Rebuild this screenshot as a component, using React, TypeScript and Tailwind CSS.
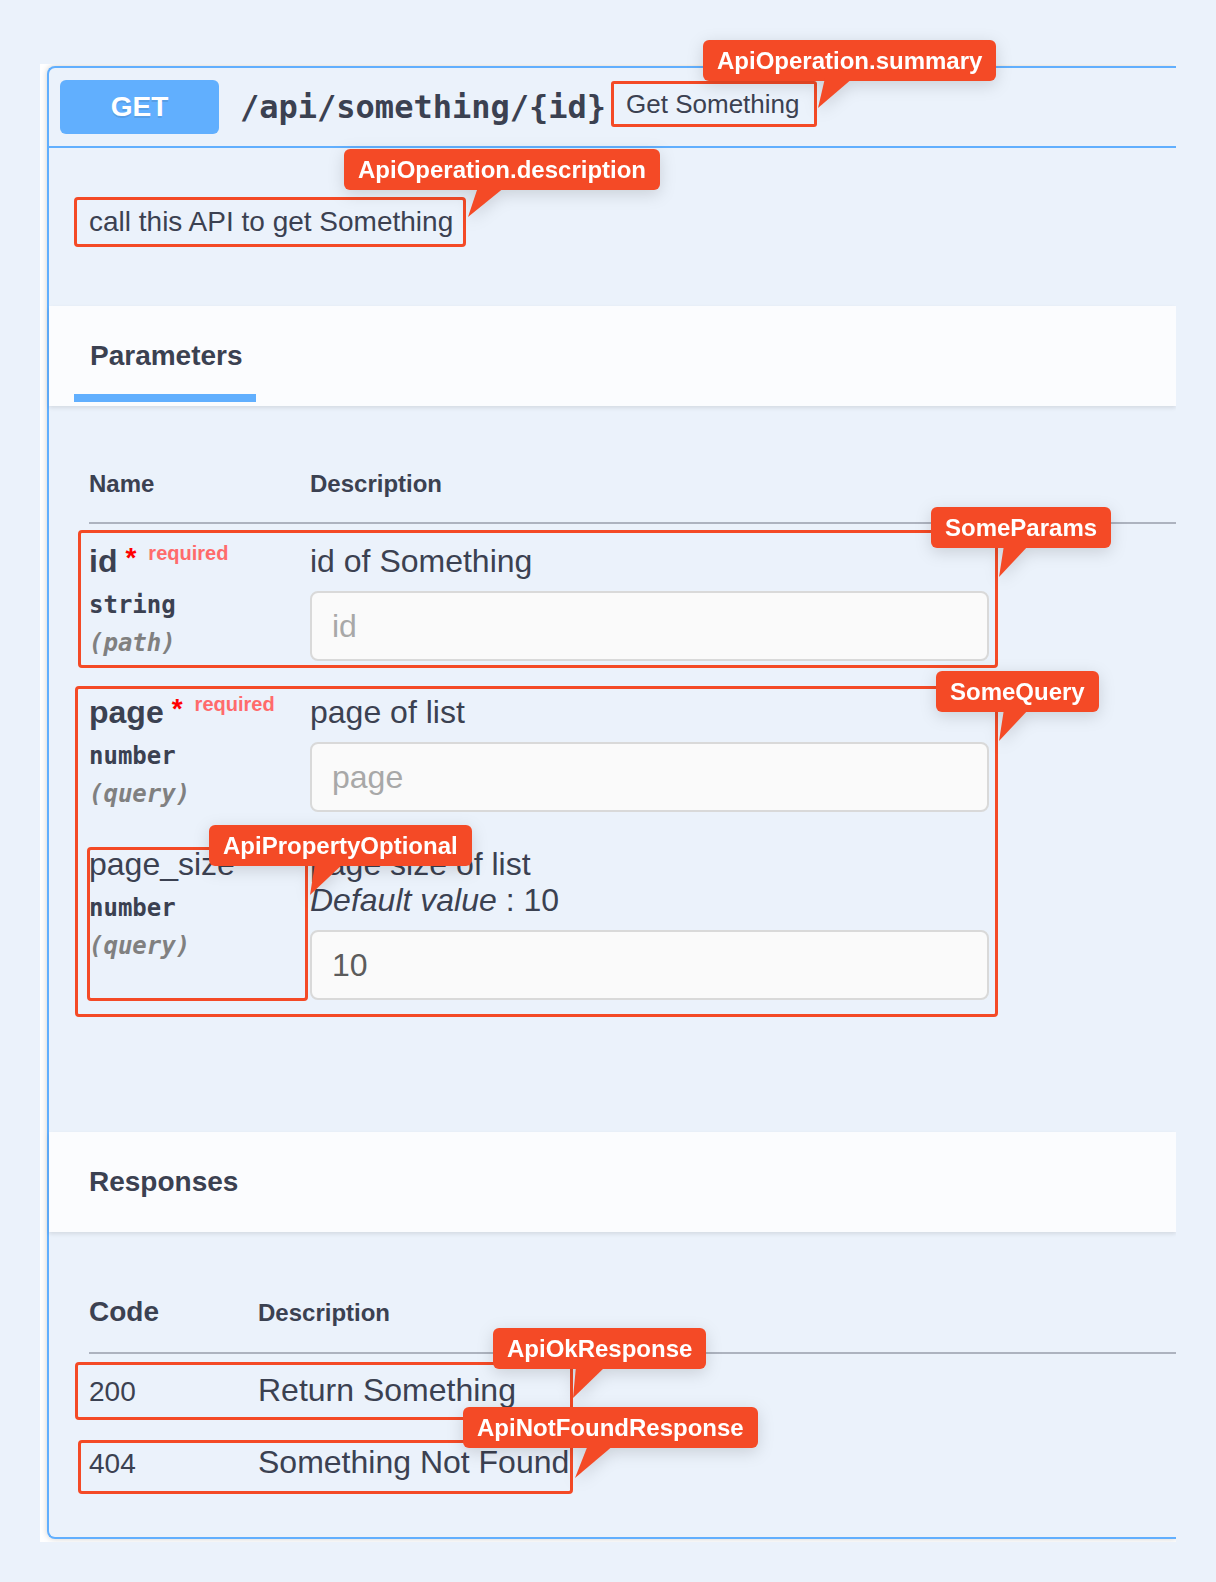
import React from "react";

const mono = "font-['DejaVu_Sans_Mono',monospace]";

function Box({ className }: { className: string }) {
  return (
    <div
      className={`pointer-events-none absolute rounded-[4px] border-[3px] border-[#f44a26] ${className}`}
    />
  );
}

function Tag({ label, pos, points }: { label: string; pos: string; points: string }) {
  return (
    <div className={`absolute z-20 drop-shadow-[0_4px_8px_rgba(0,0,0,0.14)] ${pos}`}>
      <div className="flex h-[41px] items-center whitespace-nowrap rounded-[6px] bg-[#f44a26] px-[14px] text-[24px] font-bold leading-none text-white">
        {label}
      </div>
      <svg className="absolute left-0 top-0 overflow-visible" width="1" height="1">
        <polygon points={points} fill="#f44a26" />
      </svg>
    </div>
  );
}

function ParamName({ name, required, type, where }: { name: string; required?: boolean; type: string; where: string }) {
  return (
    <>
      {required ? (
        <div className="flex h-[36px] items-baseline leading-[36px]">
          <span className="text-[32px] font-bold">{name}</span>
          <span className="relative -top-[5px] ml-[8px] text-[28px] font-bold text-[#ff0000]">*</span>
          <span className="relative -top-[12px] ml-[12px] text-[20px] font-bold text-[#ff6b6b]">required</span>
        </div>
      ) : (
        <div className="h-[36px] text-[32px] leading-[36px]">{name}</div>
      )}
      <div className={`${mono} mt-[11px] text-[24px] font-bold leading-[30px]`}>{type}</div>
      <div className={`${mono} mt-[8px] text-[24px] font-bold italic leading-[30px] text-[#808080]`}>{where}</div>
    </>
  );
}

function Field({ placeholder, value }: { placeholder: string; value?: string }) {
  return (
    <input
      readOnly
      placeholder={placeholder}
      defaultValue={value}
      className="mt-[12px] block h-[70px] w-full rounded-[8px] border-2 border-[#d9d9d9] bg-[#fafafa] px-[20px] text-[32px] text-[#5c5c5c] outline-none placeholder:text-[#a8a8a8]"
    />
  );
}

export default function App() {
  return (
    <div className="relative min-h-[1582px] w-full bg-[#ebf2fb] pl-[40px] pt-[64px] font-['Liberation_Sans',Arial,sans-serif] text-[#3b4151]">
      <div className="w-[1136px] overflow-hidden bg-white pb-[3px] pl-[7px] pt-[2px]">
        <div className="rounded-l-[8px] border-2 border-r-0 border-[#61affe] bg-[#ebf2fb] shadow-[0_0_6px_rgba(0,0,0,0.19)]">
          {/* summary bar */}
          <div className="flex h-[80px] items-center border-b-2 border-[#61affe] pl-[11px]">
            <span className="flex h-[54px] w-[159px] items-center justify-center rounded-[6px] bg-[#61affe] text-[28px] font-bold text-white [text-shadow:0_2px_0_rgba(0,0,0,0.1)]">
              GET
            </span>
            <span className={`${mono} ml-[21px] text-[32px] font-bold leading-[40px]`}>
              {"/api/something/{id}"}
            </span>
            <span className="ml-[5px] flex h-[46px] items-center self-start mt-[13px] rounded-[3px] border-[3px] border-[#f44a26] pl-[12px] pr-[15px] text-[26px] leading-[30px]">
              Get Something
            </span>
          </div>

          {/* description */}
          <div className="pb-[59px] pl-[25px] pt-[49px]">
            <div className="flex h-[50px] w-fit items-center rounded-[4px] border-[3px] border-[#f44a26] pl-[12px] pr-[10px] text-[28px] leading-[32px]">
              call this API to get Something
            </div>
          </div>

          {/* parameters header */}
          <div className="relative flex h-[100px] bg-[#fbfcfe] pl-[25px] shadow-[0_2px_4px_rgba(0,0,0,0.1)]">
            <div className="flex h-full w-[182px] flex-col justify-end pb-[4px]">
              <div className="pl-[16px] text-[28px] font-bold leading-[32px]">Parameters</div>
              <div className="mt-[22px] h-[8px] bg-[#61affe]" />
            </div>
          </div>

          {/* parameters table */}
          <div className="pb-[132px] pl-[40px] pt-[63px]">
            <div className="flex border-b-2 border-[#adb3bf] pb-[23px] text-[24px] font-bold leading-[30px]">
              <div className="w-[221px]">Name</div>
              <div>Description</div>
            </div>

            <div className="flex flex-col gap-[33px] pt-[19px]">
              <div className="relative flex">
                <Box className="-left-[11px] -top-[13px] h-[138px] w-[920px]" />
                <div className="w-[221px]">
                  <ParamName name="id" required type="string" where="(path)" />
                </div>
                <div className="w-[679px]">
                  <div className="text-[32px] leading-[36px]">id of Something</div>
                  <Field placeholder="id" />
                </div>
              </div>

              <div className="relative flex flex-col gap-[34px]">
                <Box className="-left-[14px] -top-[8px] h-[331px] w-[923px]" />
                <div className="flex">
                  <div className="w-[221px]">
                    <ParamName name="page" required type="number" where="(query)" />
                  </div>
                  <div className="w-[679px]">
                    <div className="text-[32px] leading-[36px]">page of list</div>
                    <Field placeholder="page" />
                  </div>
                </div>
                <div className="flex">
                  <div className="relative w-[221px]">
                    <Box className="-left-[2px] top-[1px] h-[154px] w-[221px]" />
                    <ParamName name="page_size" type="number" where="(query)" />
                  </div>
                  <div className="w-[679px]">
                    <div className="text-[32px] leading-[36px]">page size of list</div>
                    <div className="text-[32px] leading-[36px]">
                      <i>Default value</i> : 10
                    </div>
                    <Field placeholder="page_size" value="10" />
                  </div>
                </div>
              </div>
            </div>
          </div>

          {/* responses header */}
          <div className="relative flex h-[100px] items-center bg-[#fbfcfe] pl-[40px] text-[28px] font-bold leading-[32px] shadow-[0_2px_4px_rgba(0,0,0,0.1)]">
            Responses
          </div>

          {/* responses table */}
          <div className="pb-[55px] pl-[40px] pt-[64px]">
            <div className="flex items-baseline border-b-2 border-[#adb3bf] pb-[24px] font-bold">
              <div className="w-[169px] text-[28px] leading-[32px]">Code</div>
              <div className="text-[24px] leading-[30px]">Description</div>
            </div>
            <div className="flex flex-col gap-[34px] pt-[18px]">
              <div className="relative flex items-baseline leading-[36px]">
                <Box className="-left-[14px] -top-[10px] h-[58px] w-[498px]" />
                <div className="w-[169px] text-[28px]">200</div>
                <div className="text-[32px]">Return Something</div>
              </div>
              <div className="relative flex items-baseline leading-[36px]">
                <Box className="-left-[11px] -top-[4px] h-[54px] w-[495px]" />
                <div className="w-[169px] text-[28px]">404</div>
                <div className="text-[32px]">Something Not Found</div>
              </div>
            </div>
          </div>
        </div>
      </div>

      {/* annotation labels */}
      <Tag label="ApiOperation.summary" pos="left-[703px] top-[40px]" points="122,38 150,38 115,68" />
      <Tag label="ApiOperation.description" pos="left-[344px] top-[149px]" points="134,38 161,38 124,68" />
      <Tag label="SomeParams" pos="left-[931px] top-[507px]" points="73,38 98,38 68,70" />
      <Tag label="SomeQuery" pos="left-[936px] top-[671px]" points="68,38 93,38 63,70" />
      <Tag label="ApiPropertyOptional" pos="left-[209px] top-[825px]" points="106,38 135,38 101,70" />
      <Tag label="ApiOkResponse" pos="left-[493px] top-[1328px]" points="83,38 113,38 80,70" />
      <Tag label="ApiNotFoundResponse" pos="left-[463px] top-[1407px]" points="125,38 151,38 112,71" />
    </div>
  );
}
